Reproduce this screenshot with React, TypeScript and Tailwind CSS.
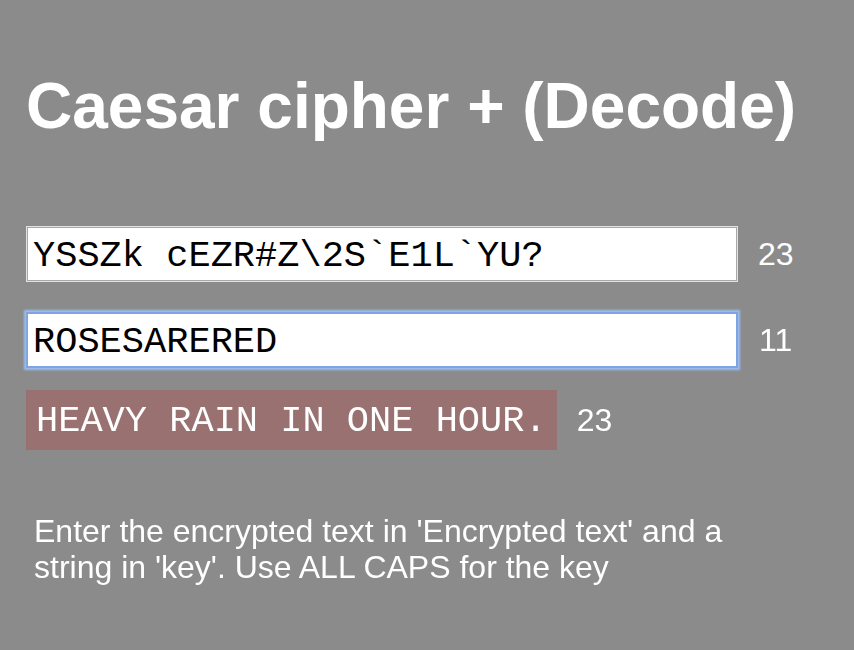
import { useState } from "react";

const mono = "font-['Liberation_Mono','Courier_New',monospace]";
const sans = "font-['Liberation_Sans',Arial,Helvetica,sans-serif]";

export default function App() {
  const [cipher, setCipher] = useState("YSSZk cEZR#Z\\2S`E1L`YU?");
  const [key, setKey] = useState("ROSESARERED");
  const plain = "HEAVY RAIN IN ONE HOUR.";

  return (
    <div className={`min-h-screen bg-[#8b8b8b] text-white ${sans}`}>
      <div className="pt-[70px] pl-[26px]">
        <h1 className="text-[64px] font-bold leading-[72px]">
          Caesar cipher + (Decode)
        </h1>

        <div className="mt-[84px] flex items-center gap-[20px]">
          <input
            value={cipher}
            onChange={(e) => setCipher(e.target.value)}
            className={`h-[56px] w-[712px] bg-white border border-[#e2e2e2] shadow-[inset_0_0_0_1px_#a8a8a8] px-[6px] pt-[4px] text-[37px] text-black outline-none ${mono}`}
          />
          <span className="text-[32px] leading-none">{cipher.length}</span>
        </div>

        <div className="mt-[30px] flex items-center gap-[20px]">
          <input
            autoFocus
            value={key}
            onChange={(e) => setKey(e.target.value)}
            className={`h-[56px] w-[712px] bg-white border-2 border-[#7ea4e2] shadow-[0_0_2px_2px_#9dbdf0] px-[5px] pt-[4px] text-[37px] text-black caret-black outline-none ${mono}`}
          />
          <span className="text-[32px] leading-none pl-[1px]">{key.length}</span>
        </div>

        <div className="mt-[22px] flex items-center gap-[20px]">
          <div
            className={`h-[60px] flex items-center bg-[#997171] px-[10px] pt-[4px] text-[37px] whitespace-pre ${mono}`}
          >
            {plain}
          </div>
          <span className="text-[32px] leading-none">{plain.length}</span>
        </div>

        <p className="mt-[63px] ml-[8px] max-w-[720px] text-[32px] leading-[36px]">
          Enter the encrypted text in 'Encrypted text' and a string in 'key'.
          Use ALL CAPS for the key
        </p>
      </div>
    </div>
  );
}
